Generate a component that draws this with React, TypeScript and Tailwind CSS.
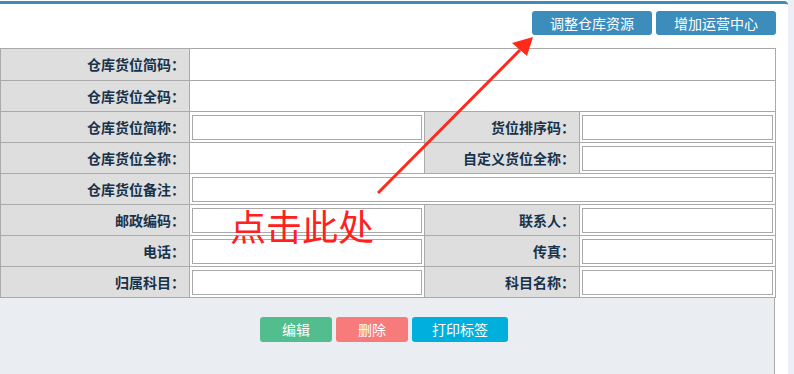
import * as React from 'react'

const font = { fontFamily: '"Noto Sans CJK SC", "Noto Sans", sans-serif' }

function Label({ text }: { text: string }) {
  return (
    <td className="border border-[#aaaaaa] bg-[#dedede] pr-[4px] text-right text-[14px] font-bold text-[#17324a] whitespace-nowrap">
      {text}
    </td>
  )
}

function Field({ colSpan, empty }: { colSpan?: number; empty?: boolean }) {
  return (
    <td colSpan={colSpan} className="border border-[#aaaaaa] bg-white pl-[2px] pr-[2px]">
      {empty ? null : <div className="h-[25px] w-full border border-[#a9a9a9] bg-white" />}
    </td>
  )
}

export default function App() {
  return (
    <div className="relative flex h-[374px] w-[794px] overflow-hidden bg-[#eceff3]" style={font}>
      <div className="flex w-[788px] flex-col bg-white pt-px">
        <div className="flex flex-1 flex-col rounded-tr-[4px] border-t-[3px] border-[#3c8dbc]">
          {/* toolbar */}
          <div className="flex h-[44px] items-start justify-end gap-[4px] pr-[12px] pt-[7px]">
            <button className="h-[24px] w-[120px] rounded-[3px] bg-[#3c8dbc] text-[14px] text-white">调整仓库资源</button>
            <button className="h-[24px] w-[120px] rounded-[3px] bg-[#3c8dbc] text-[14px] text-white">增加运营中心</button>
          </div>

          <div className="flex w-[775px] flex-1 flex-col">
            <table className="w-[775px] table-fixed border-collapse">
              <colgroup>
                <col className="w-[189px]" />
                <col className="w-[235px]" />
                <col className="w-[155px]" />
                <col className="w-[196px]" />
              </colgroup>
              <tbody>
                <tr className="h-[32px]">
                  <Label text="仓库货位简码：" />
                  <Field colSpan={3} empty />
                </tr>
                <tr className="h-[31px]">
                  <Label text="仓库货位全码：" />
                  <Field colSpan={3} empty />
                </tr>
                <tr className="h-[31px]">
                  <Label text="仓库货位简称：" />
                  <Field />
                  <Label text="货位排序码：" />
                  <Field />
                </tr>
                <tr className="h-[31px]">
                  <Label text="仓库货位全称：" />
                  <Field empty />
                  <Label text="自定义货位全称：" />
                  <Field />
                </tr>
                <tr className="h-[31px]">
                  <Label text="仓库货位备注：" />
                  <Field colSpan={3} />
                </tr>
                <tr className="h-[31px]">
                  <Label text="邮政编码：" />
                  <Field />
                  <Label text="联系人：" />
                  <Field />
                </tr>
                <tr className="h-[31px]">
                  <Label text="电话：" />
                  <Field />
                  <Label text="传真：" />
                  <Field />
                </tr>
                <tr className="h-[31px]">
                  <Label text="归属科目：" />
                  <Field />
                  <Label text="科目名称：" />
                  <Field />
                </tr>
              </tbody>
            </table>

            <div className="flex flex-1 justify-center gap-[4px] border-r border-[#aaaaaa] bg-[#eaedf2] pr-[6px] pt-[19px]">
              <button className="h-[25px] w-[72px] rounded-[3px] bg-[#52bd8d] text-[14px] text-white">编辑</button>
              <button className="h-[25px] w-[72px] rounded-[3px] bg-[#f87b7b] text-[14px] text-white">删除</button>
              <button className="h-[25px] w-[96px] rounded-[3px] bg-[#00b0dc] text-[14px] text-white">打印标签</button>
            </div>
          </div>
        </div>
      </div>

      {/* annotation overlay */}
      <svg className="pointer-events-none absolute left-0 top-0" width="794" height="374" viewBox="0 0 794 374">
        <line x1="378" y1="193" x2="520" y2="50" stroke="#ff2a1a" strokeWidth="3" />
        <polygon points="533,37 512,43 527,56" fill="#ff2a1a" />
      </svg>
      <div className="pointer-events-none absolute left-[230px] top-[207px] text-[36px] leading-none text-[#ff2020]">
        点击此处
      </div>
    </div>
  )
}
